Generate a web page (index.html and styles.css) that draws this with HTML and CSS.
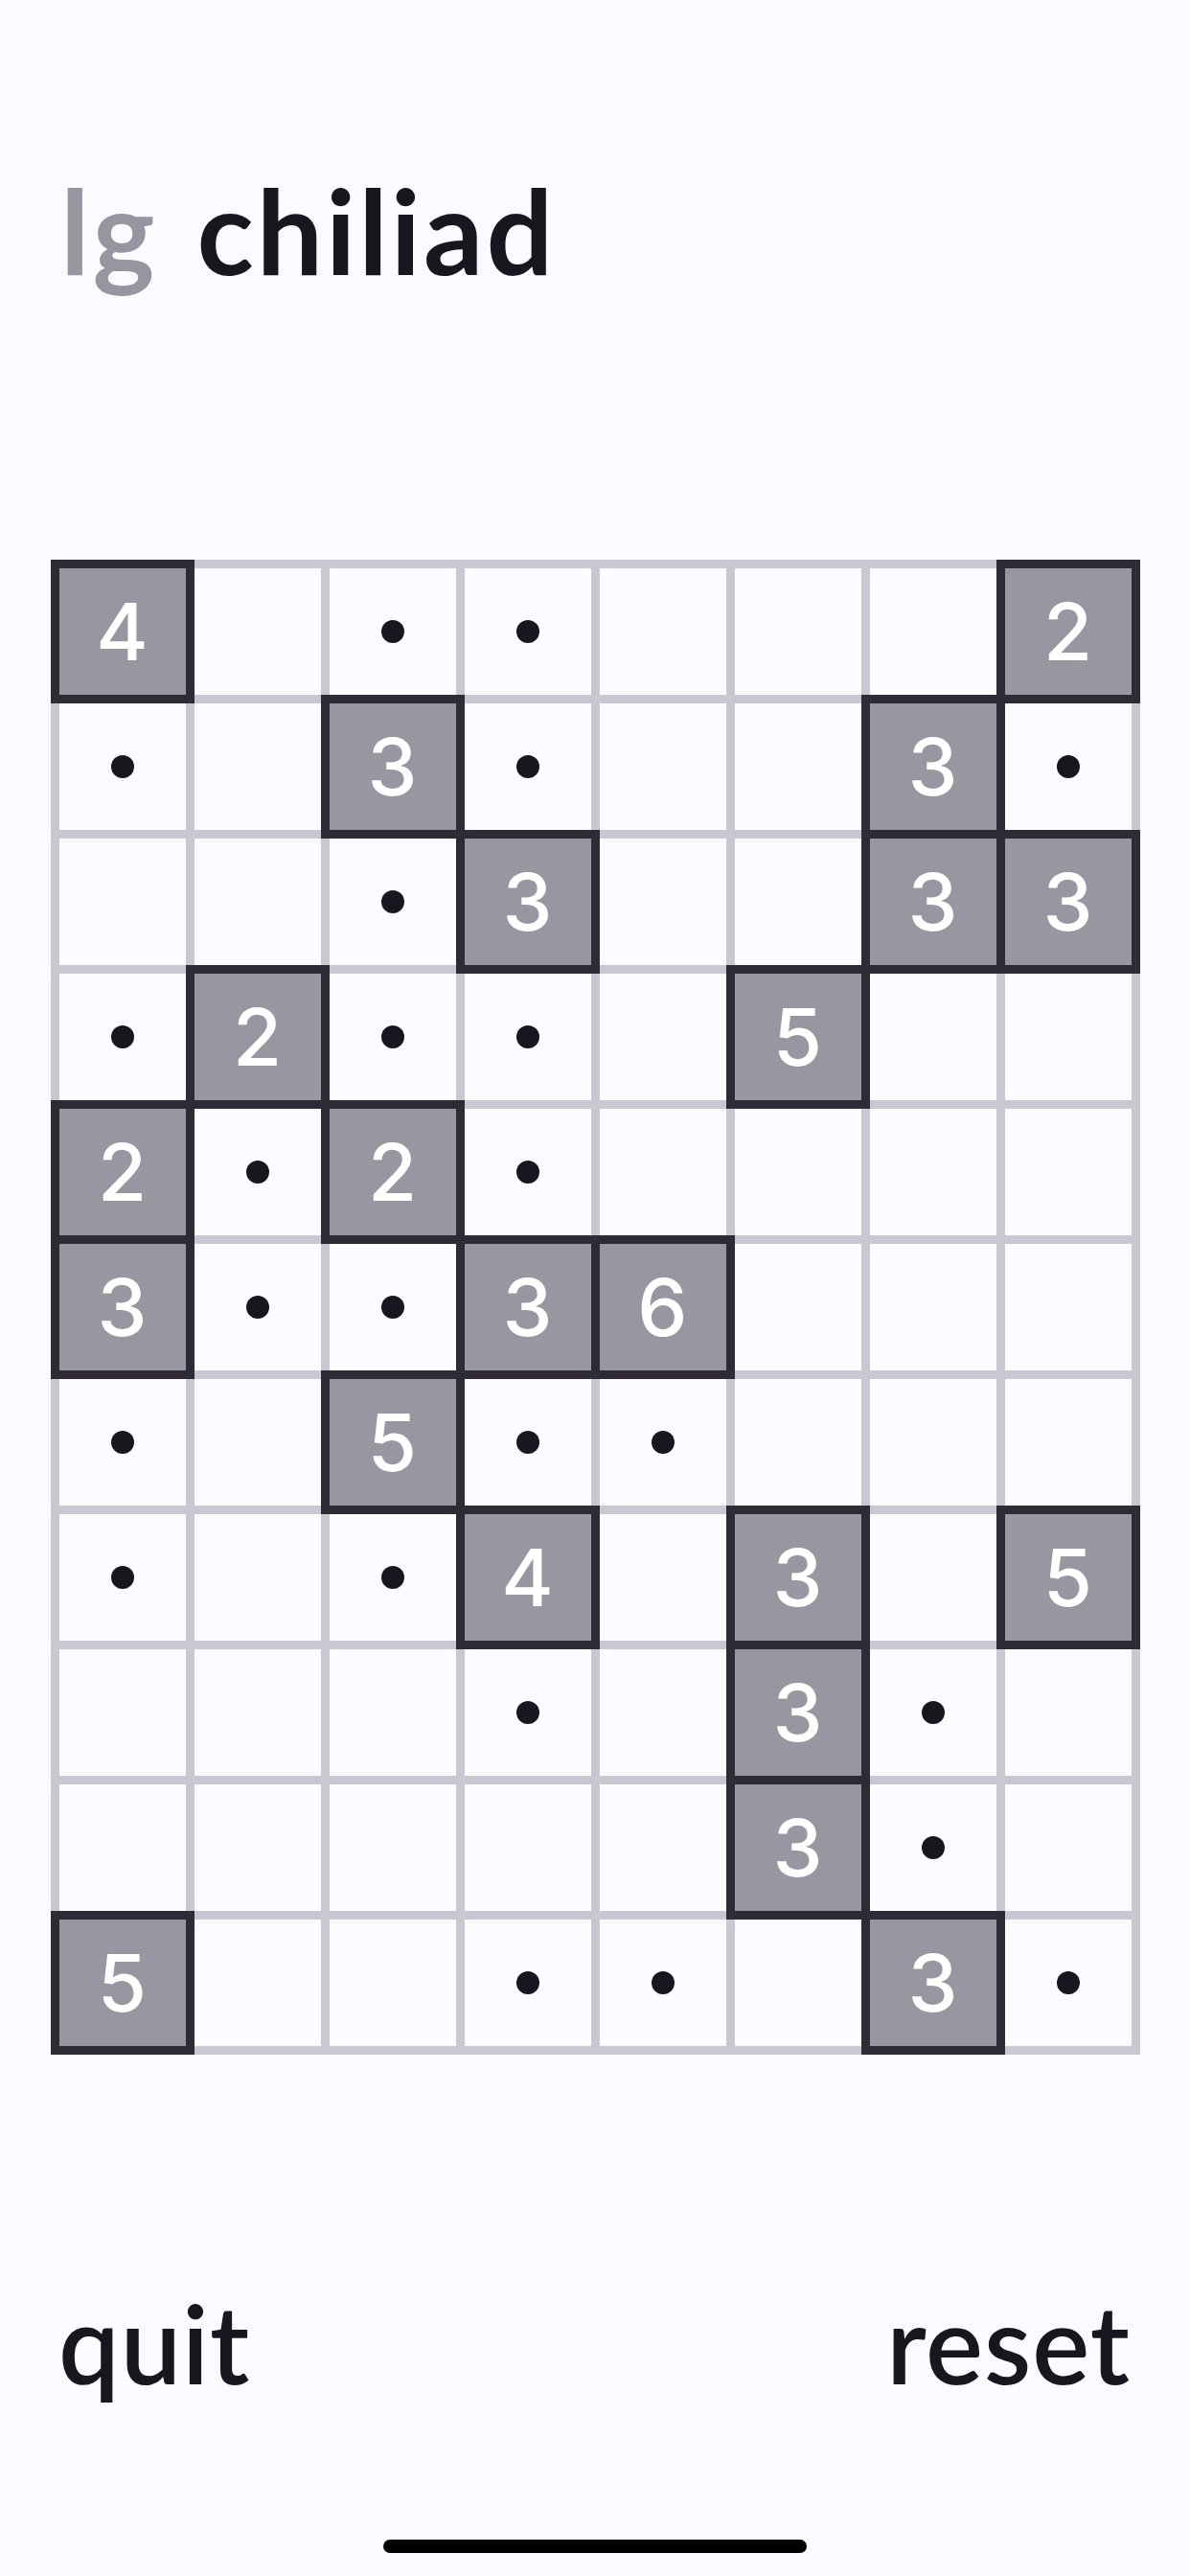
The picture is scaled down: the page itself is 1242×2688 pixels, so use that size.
FILE: index.html
```html
<!DOCTYPE html>
<html lang="en">
<head>
<meta charset="utf-8">
<title>lg chiliad</title>
<link rel="stylesheet" href="styles.css">
</head>
<body>
<div class="screen">
  <header class="header">
    <h1 class="title"><span class="title-size">lg</span> <span class="title-name">chiliad</span></h1>
  </header>
  <main class="board">
    <div class="cell shaded">4</div><div class="cell"></div><div class="cell"><span class="dot"></span></div><div class="cell"><span class="dot"></span></div><div class="cell"></div><div class="cell"></div><div class="cell"></div><div class="cell shaded">2</div>
    <div class="cell"><span class="dot"></span></div><div class="cell"></div><div class="cell shaded">3</div><div class="cell"><span class="dot"></span></div><div class="cell"></div><div class="cell"></div><div class="cell shaded">3</div><div class="cell"><span class="dot"></span></div>
    <div class="cell"></div><div class="cell"></div><div class="cell"><span class="dot"></span></div><div class="cell shaded">3</div><div class="cell"></div><div class="cell"></div><div class="cell shaded">3</div><div class="cell shaded">3</div>
    <div class="cell"><span class="dot"></span></div><div class="cell shaded">2</div><div class="cell"><span class="dot"></span></div><div class="cell"><span class="dot"></span></div><div class="cell"></div><div class="cell shaded">5</div><div class="cell"></div><div class="cell"></div>
    <div class="cell shaded">2</div><div class="cell"><span class="dot"></span></div><div class="cell shaded">2</div><div class="cell"><span class="dot"></span></div><div class="cell"></div><div class="cell"></div><div class="cell"></div><div class="cell"></div>
    <div class="cell shaded">3</div><div class="cell"><span class="dot"></span></div><div class="cell"><span class="dot"></span></div><div class="cell shaded">3</div><div class="cell shaded">6</div><div class="cell"></div><div class="cell"></div><div class="cell"></div>
    <div class="cell"><span class="dot"></span></div><div class="cell"></div><div class="cell shaded">5</div><div class="cell"><span class="dot"></span></div><div class="cell"><span class="dot"></span></div><div class="cell"></div><div class="cell"></div><div class="cell"></div>
    <div class="cell"><span class="dot"></span></div><div class="cell"></div><div class="cell"><span class="dot"></span></div><div class="cell shaded">4</div><div class="cell"></div><div class="cell shaded">3</div><div class="cell"></div><div class="cell shaded">5</div>
    <div class="cell"></div><div class="cell"></div><div class="cell"></div><div class="cell"><span class="dot"></span></div><div class="cell"></div><div class="cell shaded">3</div><div class="cell"><span class="dot"></span></div><div class="cell"></div>
    <div class="cell"></div><div class="cell"></div><div class="cell"></div><div class="cell"></div><div class="cell"></div><div class="cell shaded">3</div><div class="cell"><span class="dot"></span></div><div class="cell"></div>
    <div class="cell shaded">5</div><div class="cell"></div><div class="cell"></div><div class="cell"><span class="dot"></span></div><div class="cell"><span class="dot"></span></div><div class="cell"></div><div class="cell shaded">3</div><div class="cell"><span class="dot"></span></div>
  </main>
  <footer class="footer">
    <span class="action">quit</span>
    <span class="action">reset</span>
  </footer>
  <div class="home-indicator"></div>
</div>
</body>
</html>
```
FILE: styles.css
```css
html, body {
  margin: 0;
  padding: 0;
  background: #fcfaff;
}

.screen {
  width: 1242px;
  height: 2688px;
  display: flex;
  flex-direction: column;
  background: #fcfaff;
  font-family: "Lato", "Noto Sans", sans-serif;
  color: #18161f;
  overflow: hidden;
}

.header {
  padding: 178px 0 0 63px;
}

.title {
  margin: 0;
  font-size: 123px;
  line-height: 1;
  font-weight: 700;
  letter-spacing: 3px;
  word-spacing: 8px;
}

.title-size {
  color: #97959f;
}

.title-name {
  color: #18161f;
}

.board {
  margin: 283px auto 0;
  display: grid;
  grid-template-columns: repeat(8, 141px);
  grid-template-rows: repeat(11, 141px);
  padding: 0 9px 9px 0;
  width: max-content;
}

.cell {
  width: 150px;
  height: 150px;
  box-sizing: border-box;
  border: 9px solid #c9c7d1;
  background: #fcfbff;
  display: flex;
  align-items: center;
  justify-content: center;
  font-family: "Inter", "Liberation Sans", sans-serif;
  font-weight: 500;
  font-size: 83px;
  line-height: 1;
  color: #ffffff;
}

.cell.shaded {
  position: relative;
  z-index: 1;
  border-color: #2e2b36;
  background: #9896a0;
}

.dot {
  width: 24px;
  height: 24px;
  border-radius: 50%;
  background: #18161f;
}

.footer {
  margin-top: 244px;
  padding: 0 62px 0 61px;
  display: flex;
  justify-content: space-between;
  font-size: 113px;
  line-height: 1;
  font-weight: 600;
  letter-spacing: 1px;
  color: #18161f;
}

.home-indicator {
  margin: 149px auto 0;
  width: 442px;
  height: 14px;
  border-radius: 7px;
  background: #000000;
}
```
